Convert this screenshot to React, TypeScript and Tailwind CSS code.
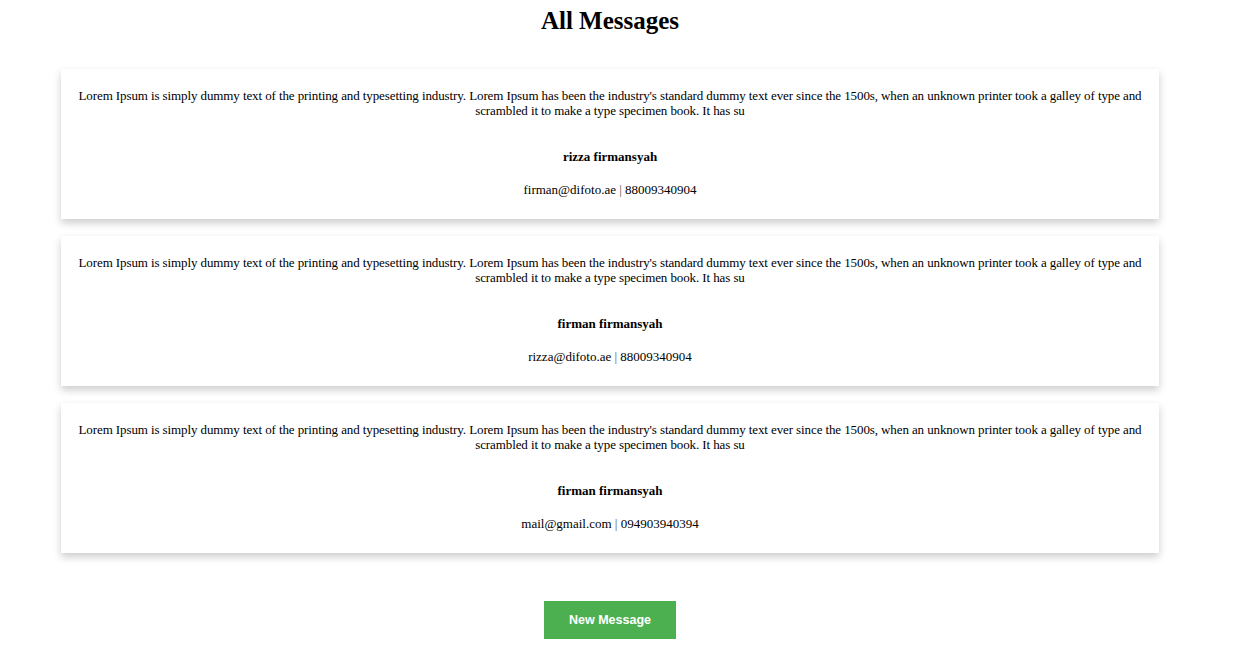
const messages = [
  { name: "rizza firmansyah", email: "firman@difoto.ae", phone: "88009340904" },
  { name: "firman firmansyah", email: "rizza@difoto.ae", phone: "88009340904" },
  { name: "firman firmansyah", email: "mail@gmail.com", phone: "094903940394" },
];

const lorem =
  "Lorem Ipsum is simply dummy text of the printing and typesetting industry. Lorem Ipsum has been the industry's standard dummy text ever since the 1500s, when an unknown printer took a galley of type and scrambled it to make a type specimen book. It has su";

export default function App() {
  return (
    <div className="w-[1220px] bg-white text-black font-['Liberation_Serif','Times_New_Roman',serif]">
      <h1 className="pt-[6px] text-center text-[25px] font-bold leading-[29px]">All Messages</h1>

      <div className="mt-[34px] flex flex-col gap-[17px] px-[61px]">
        {messages.map((m, i) => (
          <div key={i} className="bg-white px-4 pt-[19px] pb-[22px] text-center text-[13px] leading-[15px] shadow-[0_4px_8px_0_rgba(0,0,0,0.2)]">
            <p className="tracking-[-0.1px]">{lorem}</p>
            <p className="mt-[31px] font-bold">{m.name}</p>
            <p className="mt-[18px]">
              {m.email} <span className="text-[#555]">|</span> {m.phone}
            </p>
          </div>
        ))}
      </div>

      <div className="mt-[48px] flex justify-center">
        <button className="h-[38px] w-[132px] bg-[#4caf50] text-[12.5px] font-bold text-white font-['Liberation_Sans',Arial,sans-serif]">
          New Message
        </button>
      </div>
    </div>
  );
}
